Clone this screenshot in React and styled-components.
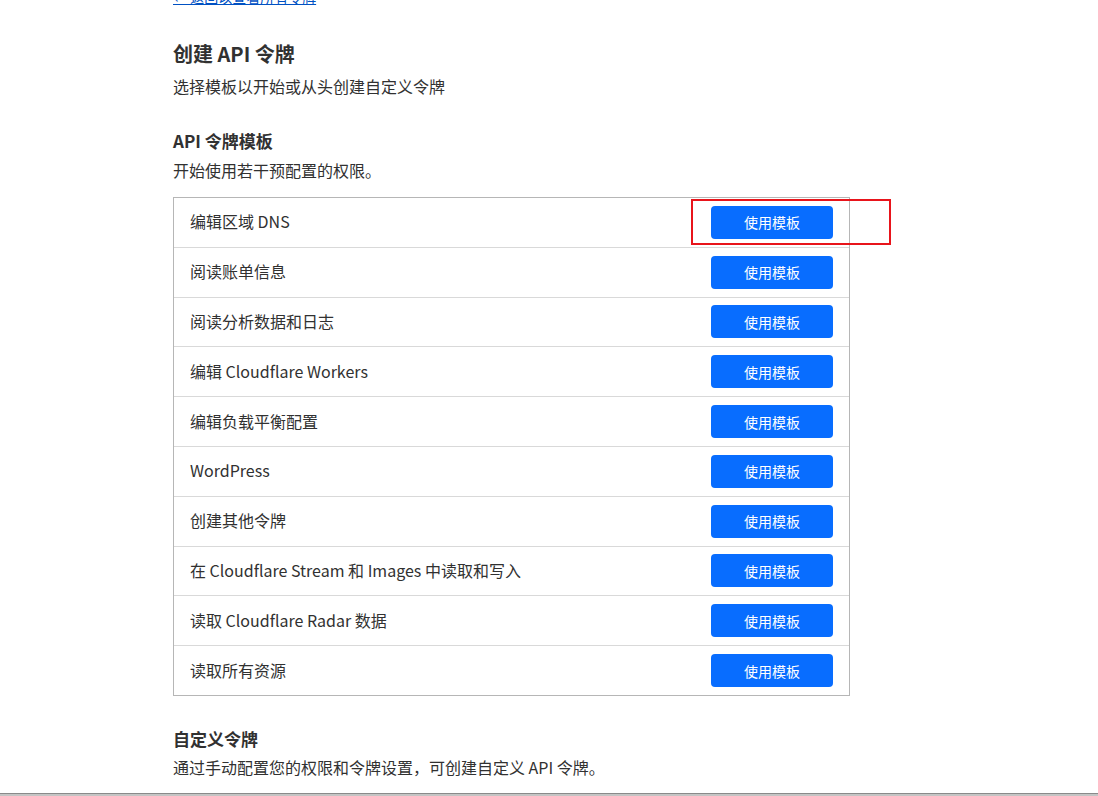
import React from 'react'
import styled, { createGlobalStyle } from 'styled-components'

const GlobalStyle = createGlobalStyle`
    body {
        margin: 0;
        background: #fff;
        font-family: "Noto Sans CJK SC", "Noto Sans", sans-serif;
        color: #313131;
    }
`;

const Page = styled.div`
    height: 796px;
    overflow: hidden;
    display: flex;
    flex-direction: column;
`;

const Content = styled.div`
    width: 677px;
    padding-left: 173px;
    margin-top: -13px;
    display: flex;
    flex-direction: column;
`;

const BackLink = styled.a`
    font-size: 14px;
    line-height: 20px;
    color: #0051c3;
    text-decoration: underline;
    cursor: pointer;
`;

const Title = styled.h1`
    margin: 33px 0 0;
    font-size: 20px;
    line-height: 28px;
    font-weight: 700;
`;

const Text = styled.p`
    margin: ${p => p.$top || 0}px 0 0;
    font-size: 16px;
    line-height: 24px;
`;

const Heading = styled.h2`
    margin: ${p => p.$top}px 0 0;
    font-size: 17px;
    line-height: 24px;
    font-weight: 700;
`;

const Table = styled.div`
    margin-top: 15px;
    border: 1px solid #b6b6b6;
    display: flex;
    flex-direction: column;
`;

const Row = styled.div`
    position: relative;
    height: 48.8px;
    display: flex;
    align-items: center;
    justify-content: space-between;
    padding: 0 16px 0 16px;
    border-bottom: 1px solid #d9d9d9;
    font-size: 16px;
    &:last-child {
        border-bottom: none;
    }
`;

const RowLabel = styled.span`
    position: relative;
    top: -1px;
`;

const Button = styled.button`
    width: 122px;
    height: 33px;
    border: none;
    border-radius: 4px;
    background: #086dff;
    color: #fff;
    font-family: inherit;
    font-size: 14px;
    cursor: pointer;
`;

const Highlight = styled.div`
    position: absolute;
    left: 517px;
    top: 1px;
    width: 196px;
    height: 42px;
    border: 2px solid #e8141b;
    pointer-events: none;
`;

const BottomBar = styled.div`
    margin-top: auto;
    height: 2px;
    border-top: 1px solid #8a8a8a;
    background: #c4c4c4;
`;

const templates = [
    '编辑区域 DNS',
    '阅读账单信息',
    '阅读分析数据和日志',
    '编辑 Cloudflare Workers',
    '编辑负载平衡配置',
    'WordPress',
    '创建其他令牌',
    '在 Cloudflare Stream 和 Images 中读取和写入',
    '读取 Cloudflare Radar 数据',
    '读取所有资源',
];

export default function App() {
    return (
        <Page>
            <GlobalStyle />
            <Content>
                <BackLink>← 返回以查看所有令牌</BackLink>
                <Title>创建 API 令牌</Title>
                <Text $top={6}>选择模板以开始或从头创建自定义令牌</Text>
                <Heading $top={31}>API 令牌模板</Heading>
                <Text $top={5}>开始使用若干预配置的权限。</Text>
                <Table>
                    {templates.map((name, i) => (
                        <Row key={name}>
                            <RowLabel>{name}</RowLabel>
                            <Button>使用模板</Button>
                            {i === 0 && <Highlight />}
                        </Row>
                    ))}
                </Table>
                <Heading $top={31}>自定义令牌</Heading>
                <Text $top={4}>通过手动配置您的权限和令牌设置，可创建自定义 API 令牌。</Text>
            </Content>
            <BottomBar />
        </Page>
    )
}
